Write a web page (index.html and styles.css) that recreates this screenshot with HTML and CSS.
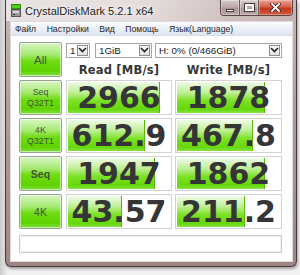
FILE: index.html
```html
<!DOCTYPE html>
<html>
<head>
<meta charset="utf-8">
<link rel="stylesheet" href="styles.css">
</head>
<body>
<div class="win">
  <div class="titlebar">
    <svg class="appicon" width="10" height="13" viewBox="0 0 10 13">
      <rect x="0.5" y="0.5" width="9" height="4" fill="#4fcf1a" stroke="#2f8a10"/>
      <rect x="0.5" y="5.5" width="9" height="7" fill="#9a9a9a" stroke="#555"/>
      <rect x="2" y="7" width="6" height="2" fill="#d8d8d8"/>
      <rect x="2" y="10" width="2" height="1" fill="#333"/>
    </svg>
    <span class="title">CrystalDiskMark 5.2.1 x64</span>
    <div class="caption">
      <div class="cbtn min"><span class="minbar"></span></div>
      <div class="cbtn max"><span class="maxbox"></span></div>
      <div class="cbtn close">
        <svg width="11" height="9" viewBox="0 0 11 9">
          <path d="M2 1 L9 8 M9 1 L2 8" stroke="#3a2020" stroke-width="3.4" stroke-linecap="square"/>
          <path d="M2 1 L9 8 M9 1 L2 8" stroke="#fff" stroke-width="1.8" stroke-linecap="square"/>
        </svg>
      </div>
    </div>
  </div>
  <div class="framebody">
    <div class="client">
      <div class="menubar">
        <span class="mi">Файл</span>
        <span class="mi">Настройки</span>
        <span class="mi">Вид</span>
        <span class="mi">Помощь</span>
        <span class="mi">Язык(Language)</span>
      </div>
      <div class="main">
        <div class="btn all">All</div>
        <div class="combos">
          <div class="combo c1"><span>1</span><span class="arrow"><svg width="9" height="6" viewBox="0 0 9 6"><path d="M1 1 L4.5 4.5 L8 1" fill="none" stroke="#222" stroke-width="1.6"/></svg></span></div>
          <div class="combo c2"><span>1GiB</span><span class="arrow"><svg width="9" height="6" viewBox="0 0 9 6"><path d="M1 1 L4.5 4.5 L8 1" fill="none" stroke="#222" stroke-width="1.6"/></svg></span></div>
          <div class="combo c3"><span>H: 0% (0/466GiB)</span><span class="arrow"><svg width="9" height="6" viewBox="0 0 9 6"><path d="M1 1 L4.5 4.5 L8 1" fill="none" stroke="#222" stroke-width="1.6"/></svg></span></div>
        </div>
        <div class="head">Read [MB/s]</div>
        <div class="head">Write [MB/s]</div>

        <div class="btn two"><span>Seq</span><span>Q32T1</span></div>
        <div class="cell"><div class="fill" style="width:90%"></div><div class="val">2966</div></div>
        <div class="cell"><div class="fill" style="width:85%"></div><div class="val">1878</div></div>

        <div class="btn two"><span>4K</span><span>Q32T1</span></div>
        <div class="cell"><div class="fill" style="width:75%"></div><div class="val">612.9</div></div>
        <div class="cell"><div class="fill" style="width:74%"></div><div class="val">467.8</div></div>

        <div class="btn seq">Seq</div>
        <div class="cell"><div class="fill" style="width:85%"></div><div class="val">1947</div></div>
        <div class="cell"><div class="fill" style="width:85%"></div><div class="val">1862</div></div>

        <div class="btn k4">4K</div>
        <div class="cell"><div class="fill" style="width:53%"></div><div class="val">43.57</div></div>
        <div class="cell"><div class="fill" style="width:66%"></div><div class="val">211.2</div></div>

        <div class="status"></div>
      </div>
    </div>
  </div>
</div>
</body>
</html>
```

FILE: styles.css
```css
* { box-sizing: border-box; }
html, body { margin: 0; padding: 0; }
body {
  width: 300px;
  height: 275px;
  overflow: hidden;
  background: linear-gradient(to right, #c9c9c9 0, #dedede 4px, #f1f1f1 8px, #f3f3f3);
  font-family: "Liberation Sans", Arial, sans-serif;
}
.win {
  margin-left: 5px;
  width: 292px;
  height: 267px;
  border: 1px solid #4a3b3c;
  border-top: 0;
  border-radius: 0 0 6px 6px;
  background: linear-gradient(to bottom, #c8b8b7 0, #b29c9b 40%, #9d8584 100%);
  display: flex;
  flex-direction: column;
  box-shadow: 1px 2px 3px rgba(0,0,0,.35);
}
.titlebar {
  height: 21px;
  display: flex;
  align-items: flex-start;
  padding-left: 5px;
  background: linear-gradient(to right, rgba(255,255,255,.6) 0, rgba(255,255,255,.55) 45%, rgba(255,255,255,.15) 80%, rgba(255,255,255,0));
}
.appicon { margin-top: 4px; flex: none; }
.title {
  margin-left: 4px;
  margin-top: 5px;
  font-size: 11px;
  line-height: 13px;
  color: #1c1c1c;
  text-shadow: 0 0 4px #fff, 0 0 6px #fff;
  white-space: nowrap;
}
.caption {
  margin-left: auto;
  margin-right: 3px;
  display: flex;
  height: 16px;
  border: 1px solid #5a4646;
  border-top: 0;
  border-radius: 0 0 4px 4px;
  overflow: hidden;
}
.cbtn {
  height: 100%;
  display: flex;
  align-items: center;
  justify-content: center;
}
.min, .max {
  width: 19px;
  background: linear-gradient(to bottom, #d8cccc, #b8a5a4 50%, #a89392 51%, #b9a7a6);
  border-right: 1px solid #6d5a5a;
  box-shadow: inset 0 0 0 1px rgba(255,255,255,.35);
}
.minbar {
  width: 8px; height: 3px; margin-top: 5px;
  background: #fff; border: 1px solid #4a3a3a;
}
.maxbox {
  width: 9px; height: 7px;
  border: 2px solid #fff; outline: 1px solid #4a3a3a;
}
.close {
  width: 33px;
  background: linear-gradient(to bottom, #eaa08f, #d4624a 45%, #c2381f 55%, #d35b3b);
  box-shadow: inset 0 0 0 1px rgba(255,255,255,.3);
}
.framebody {
  flex: 1;
  padding: 0 3px 4px 4px;
  display: flex;
}
.client {
  flex: 1;
  border: 1px solid #e2dada;
  background: #fff;
  display: flex;
  flex-direction: column;
}
.menubar {
  height: 14px;
  display: flex;
  align-items: center;
  padding-left: 4px;
  gap: 10.5px;
  background: linear-gradient(to bottom, #fbfcfe, #e9eef6 60%, #dce5f1);
  border-bottom: 1px solid #d6dfec;
}
.mi {
  font-size: 8.6px;
  color: #1e1e1e;
  white-space: nowrap;
}
.main {
  flex: 1;
  padding: 6px 8px 0 8px;
  display: grid;
  grid-template-columns: 44px 106px 107px;
  grid-template-rows: 16px 16px 35px 35px 35px 35px 21px;
  column-gap: 3px;
  row-gap: 3px;
  align-content: start;
}
.btn {
  width: 43px;
  border: 1px solid #98a294;
  border-radius: 2px;
  background: linear-gradient(to bottom, #d9f6c6 0%, #a6ea72 35%, #6fdb14 55%, #5fd300 85%, #80e03e 100%);
  box-shadow: inset 0 0 0 1px rgba(255,255,255,.55);
  color: #3f5637;
  display: flex;
  flex-direction: column;
  align-items: center;
  justify-content: center;
  text-align: center;
}
.all { grid-row: 1 / span 2; font-size: 11.5px; }
.two { font-size: 8.8px; line-height: 11px; }
.seq { font-size: 10.5px; font-weight: bold; }
.k4 { font-size: 10.5px; }
.combos {
  grid-column: 2 / span 2;
  display: flex;
  align-items: center;
}
.combo {
  height: 15px;
  border: 1px solid #a7a7a7;
  background: #fff;
  display: flex;
  align-items: center;
  padding-left: 3px;
  font-size: 9.8px;
  color: #1c1c1c;
  white-space: nowrap;
}
.c1 { width: 24px; }
.c2 { width: 57px; margin-left: 5px; }
.c3 { width: 127px; margin-left: 3px; }
.arrow {
  margin-left: auto;
  margin-right: 1px;
  width: 11px;
  height: 11px;
  border: 1px solid #8d8d8d;
  background: linear-gradient(#fdfdfd, #e2e2e2);
  display: flex;
  align-items: center;
  justify-content: center;
}
.head {
  font-family: "DejaVu Sans", Verdana, sans-serif;
  font-weight: bold;
  font-size: 11.5px;
  letter-spacing: 0.2px;
  color: #363636;
  text-align: center;
  line-height: 18px;
  white-space: nowrap;
}
.cell {
  border: 1px solid #d3d3d3;
  background: #fff;
  padding: 1px;
  display: grid;
}
.fill, .val { grid-area: 1 / 1; }
.fill {
  justify-self: start;
  height: 100%;
  background: linear-gradient(to bottom, #f1fbea 0%, #bdef92 35%, #7ce126 60%, #66d80a 88%, #86e246 100%);
  border-right: 1px solid #56b80a;
}
.val {
  font-family: "DejaVu Sans", Verdana, sans-serif;
  font-weight: bold;
  font-size: 30px;
  line-height: 31px;
  color: #353535;
  text-align: center;
  white-space: nowrap;
}
.status {
  grid-column: 1 / -1;
  margin-top: 3px;
  border: 1px solid #cdcdcd;
  background: #fff;
  box-shadow: inset 0 0 0 1px #f0f0f0;
}
```
